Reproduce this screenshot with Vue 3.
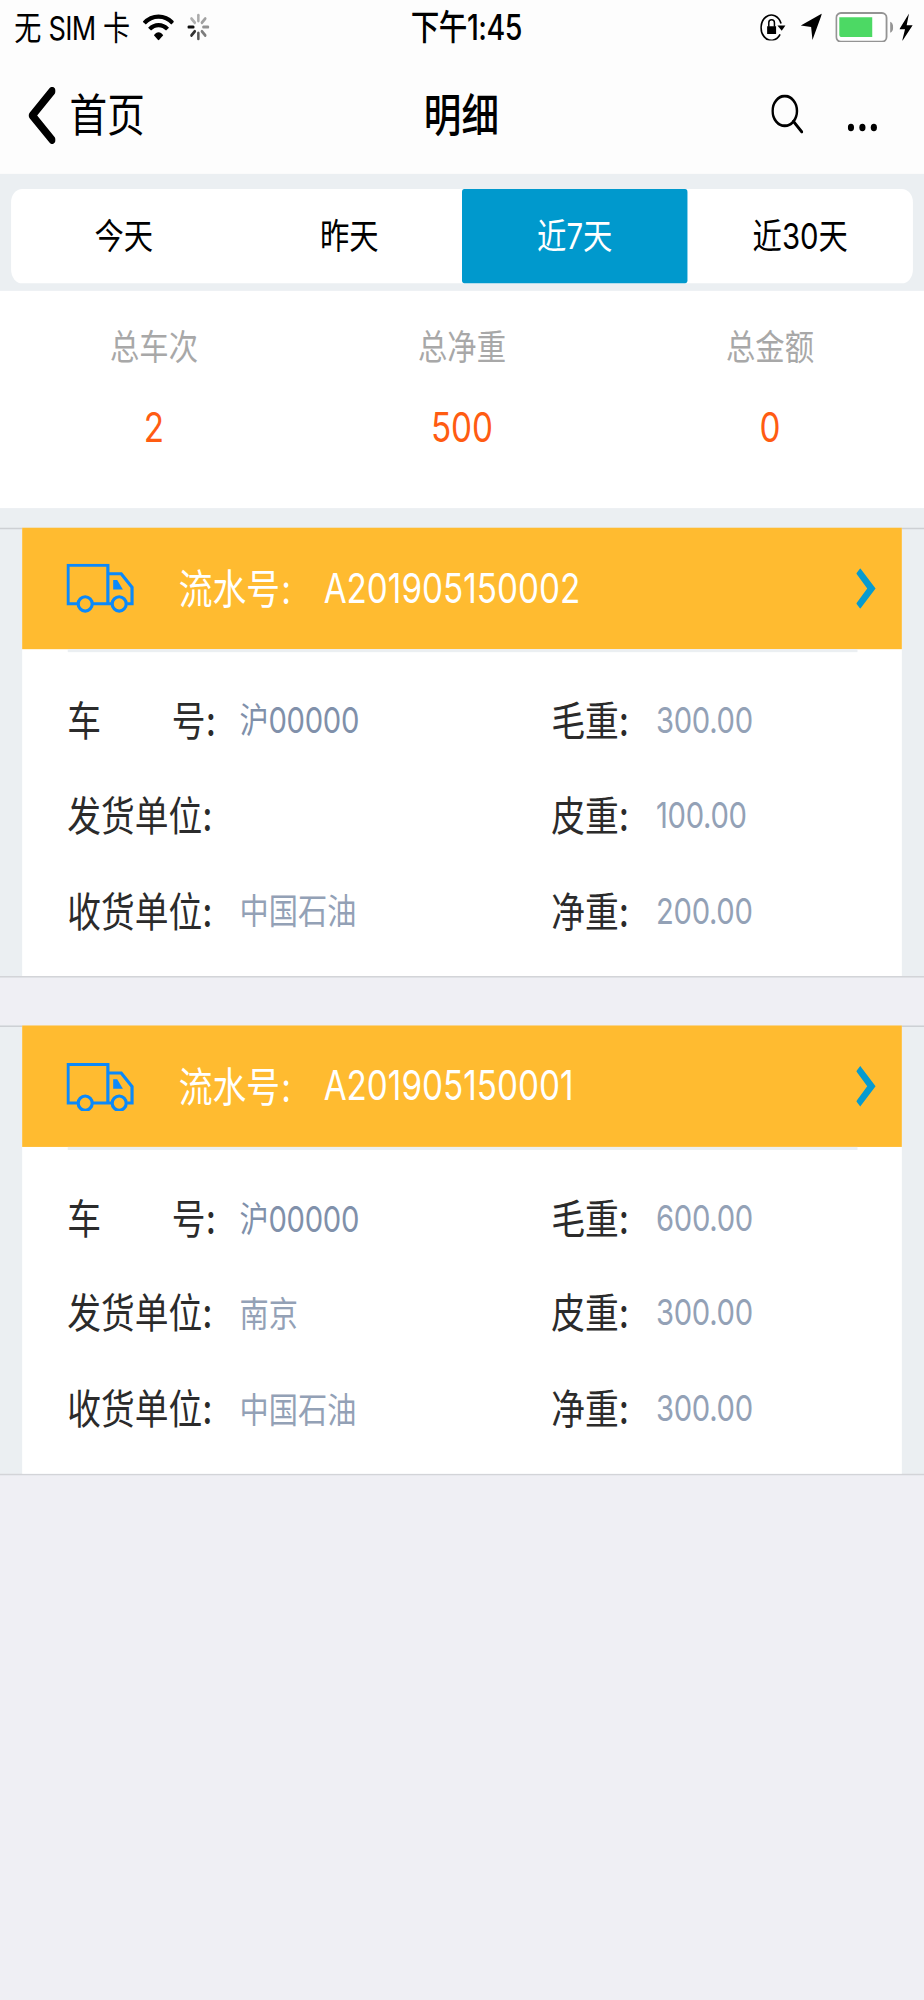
<script setup>
const tabs = ['今天', '昨天', '近7天', '近30天']
const activeTab = '近7天'
const stats = [
  { label: '总车次', value: '2' },
  { label: '总净重', value: '500' },
  { label: '总金额', value: '0' },
]
const records = [
  { no: 'A201905150002', plate: '沪00000', sender: '', receiver: '中国石油', gross: '300.00', tare: '100.00', net: '200.00' },
  { no: 'A201905150001', plate: '沪00000', sender: '南京', receiver: '中国石油', gross: '600.00', tare: '300.00', net: '300.00' },
]
const spokes = [
  [270, 0.95], [225, 0.8], [180, 0.65], [135, 0.5],
  [90, 0.42], [45, 0.36], [0, 0.32], [315, 0.3],
]
</script>

<template>
  <div class="viewport">
    <div class="screen">
      <div class="status">
        <div class="left">
          <span class="carrier">无 <i>SIM</i> 卡</span>
          <svg class="wifi" viewBox="0 0 94 81" preserveAspectRatio="none">
            <path d="M4 29C28 3 66 3 90 29" fill="none" stroke="#000" stroke-width="13" />
            <path d="M20 47C36 31 58 31 74 47" fill="none" stroke="#000" stroke-width="12.5" />
            <path d="M33 65C41 53 53 53 61 65L47 81Z" />
          </svg>
          <svg class="spinner" viewBox="-33 -33 66 66">
            <line v-for="s in spokes" :key="s[0]" x1="0" y1="-15" x2="0" y2="-29" stroke="#000" stroke-width="7.5" stroke-linecap="round" :opacity="s[1]" :transform="`rotate(${s[0]})`" />
          </svg>
        </div>
        <div class="time">下午<i>1:45</i></div>
        <div class="right">
          <svg class="lock" viewBox="0 0 76 82" preserveAspectRatio="none">
            <path d="M63 30A31 38 0 1 0 60 63" fill="none" stroke="#000" stroke-width="5" />
            <path d="M52 36H76L65 52Z" />
            <path d="M21 38H48V62H21Z" />
            <path d="M26 40V28C26 16 43 16 43 28V40" fill="none" stroke="#000" stroke-width="4.5" />
          </svg>
          <svg class="locate" viewBox="0 0 64 80" preserveAspectRatio="none"><path d="M64 0L35 80L31 41L0 36Z" /></svg>
          <svg class="battery" viewBox="0 0 174 92" preserveAspectRatio="none">
            <rect x="3" y="3" width="151" height="86" rx="14" fill="#fff" stroke="#949494" stroke-width="5.5" />
            <path d="M12 16H111V75H20Q12 75 12 67Z" fill="#4cd964" />
            <path d="M165 29Q174 33 174 46Q174 59 165 62Z" fill="#949494" />
          </svg>
          <svg class="bolt" viewBox="0 0 40 84" preserveAspectRatio="none"><path d="M29 0L0 47H17L8 84L40 35H22Z" /></svg>
        </div>
      </div>

      <div class="nav">
        <div class="back">
          <svg viewBox="0 0 22 38"><path d="M19.3 2.7L3.2 19L19.3 35.3" fill="none" stroke="#000" stroke-width="5.6" stroke-linecap="round" stroke-linejoin="round" /></svg>
          <span>首页</span>
        </div>
        <div class="title">明细</div>
        <div class="actions">
          <svg class="search" viewBox="0 0 26 26"><circle cx="11" cy="11" r="9.900" fill="none" stroke="#000" stroke-width="2" /><path d="M18 18L24.8 25" fill="none" stroke="#000" stroke-width="2.2" stroke-linecap="round" /></svg>
          <svg class="dots" viewBox="0 0 24 6"><circle cx="2.7" cy="3" r="2.5" /><circle cx="12" cy="3" r="2.5" /><circle cx="21.3" cy="3" r="2.5" /></svg>
        </div>
      </div>

      <div class="tabs">
        <div class="tab-group">
          <div v-for="t in tabs" :key="t" class="tab" :class="{ active: t === activeTab }"><span>{{ t }}</span></div>
        </div>
      </div>

      <div class="stats">
        <div v-for="s in stats" :key="s.label" class="stat">
          <div class="stat-label">{{ s.label }}</div>
          <div class="stat-value">{{ s.value }}</div>
        </div>
      </div>

      <div class="list">
        <div v-for="r in records" :key="r.no" class="row">
          <div class="card">
            <div class="head">
              <svg class="truck" viewBox="0 0 201 147" preserveAspectRatio="none">
                <g fill="none" stroke="#0a89fb" stroke-width="9.5">
                  <path d="M33 120H4.5V4.5H124V120M78 120H137M124 30H164L196.500 71V120H182" />
                  <ellipse cx="56" cy="120.500" rx="21" ry="21.500" />
                  <ellipse cx="158" cy="120.500" rx="21" ry="21.500" />
                </g>
                <path d="M140 49H152L169 77H140Z" fill="#0a89fb" />
              </svg>
              <span class="serial">流水号<b>:</b></span>
              <span class="no">{{ r.no }}</span>
              <svg class="arrow" viewBox="0 0 58 122" preserveAspectRatio="none"><path d="M12 0L58 61L12 122L0 106L33 61L0 16Z" fill="#069bd0" /></svg>
            </div>
            <div class="divider"></div>
            <div class="fields">
              <div class="label"><span class="wide">车</span>号<b>:</b></div><div class="val plate">{{ r.plate }}</div>
              <div class="label">毛重<b>:</b></div><div class="val num">{{ r.gross }}</div>
              <div class="label">发货单位<b>:</b></div><div class="val">{{ r.sender }}</div>
              <div class="label">皮重<b>:</b></div><div class="val num">{{ r.tare }}</div>
              <div class="label">收货单位<b>:</b></div><div class="val">{{ r.receiver }}</div>
              <div class="label">净重<b>:</b></div><div class="val num">{{ r.net }}</div>
            </div>
          </div>
        </div>
      </div>
    </div>
  </div>
</template>

<style>
html, body { margin: 0; background: #efeff4; }
</style>

<style scoped>
.viewport { width: 924px; height: 2000px; overflow: hidden; }
/* 750 x 1334 layout filling the taller window */
.screen {
  width: 750px; height: 1334px; box-sizing: border-box;
  transform: scale(1.232, 1.49925); transform-origin: 0 0;
  background: #efeff4; color: #000;
  font-family: Inter, "Noto Sans CJK SC", sans-serif; font-weight: 400;
  white-space: nowrap;
}
svg { display: block; flex: none; }
i { font-style: normal; }
b { font-weight: 500; }

.status { display: grid; grid-template-columns: 1fr auto 1fr; height: 38px; background: #fdfdfd; align-items: center; }
.left { display: flex; align-items: center; padding-left: 11.500px; }
.carrier { width: 104.500px; font-size: 22px; line-height: 38px; letter-spacing: -0.150px; margin-top: -1px; }
.carrier i { letter-spacing: -0.6px; }
.wifi { width: 25.4px; height: 18px; margin-top: -3px; }
.spinner { width: 18px; height: 18px; margin: -3px 0 0 11px; }
.time { font-size: 23.200px; line-height: 38px; font-weight: 500; letter-spacing: -0.4px; padding-left: 7px; }
.right { display: flex; align-items: center; justify-content: flex-end; padding-right: 9px; margin-top: -2px; }
.lock { width: 20.5px; height: 18.2px; }
.locate { width: 17.3px; height: 17.7px; margin-left: 12px; }
.battery { width: 47px; height: 20.5px; margin-left: 11px; }
.bolt { width: 10.8px; height: 18.7px; margin-left: 5px; }

.nav { display: grid; grid-template-columns: 1fr auto 1fr; height: 78px; align-items: center; background: #fdfdfd; }
.back { display: flex; align-items: center; padding-left: 23px; font-size: 30.500px; }
.back svg { width: 22px; height: 38px; margin-right: 11.500px; }
.back span { margin-top: -4px; }
.title { font-size: 30.500px; font-weight: 500; margin: -4px 1px 0 0; }
.actions { display: flex; justify-content: flex-end; align-items: center; padding-right: 38.500px; }
.search { width: 26px; height: 26px; margin-top: -3px; }
.dots { width: 24px; height: 6px; margin: 15.500px 0 0 36px; }

.tabs { height: 78px; box-sizing: border-box; padding: 9.600px 9px 5px; background: #ebeff2; }
.tab-group { display: grid; grid-template-columns: repeat(4, 1fr); height: 63.400px; background: #fff; border-radius: 9px; }
.tab { display: flex; align-items: center; justify-content: center; font-size: 23.800px; }
.tab span { margin-top: -4px; }
.tab.active { background: #0099cd; color: #fff; border-radius: 2px; }

.stats { display: grid; grid-template-columns: repeat(3, 1fr); height: 145px; background: #fff; text-align: center; }
.stat-label { margin-top: 22.500px; line-height: 30px; font-size: 23.800px; color: #a8a8a8; }
.stat-value { margin-top: 23.500px; line-height: 32px; font-size: 27px; color: #ff5c12; }

.list { display: flex; flex-direction: column; gap: 31.800px; padding-top: 12.700px; background: linear-gradient(#ebeff2 13px, transparent 13px); }
.row { height: 300.400px; box-sizing: border-box; padding: 0 18px; background: #ebeff2; border-top: 1px solid #cdd0d4; border-bottom: 1px solid #d3d4d8; }
.card { height: 298.400px; background: #fff; }
.head { display: flex; align-items: center; height: 81px; box-sizing: border-box; margin-top: -0.400px; padding: 0 21.500px 0 36.300px; background: #ffbb30; color: #fff; font-size: 27.400px; }
.truck { width: 54.400px; height: 32.700px; }
.serial { width: 117.500px; margin: -3.500px 0 0 36.500px; }
.serial b { font-weight: 400; margin-left: 1px; }
.no { font-size: 27px; }
.arrow { width: 15.700px; height: 27.100px; margin-left: auto; }
.divider { height: 2px; margin: 0 36.500px; background: #ebeff2; }
.fields { display: grid; grid-template-columns: 140px 253px 85px 1fr; grid-auto-rows: 63.500px; align-items: center; padding: 12.300px 0 0 36.500px; }
.label { font-size: 27.400px; color: #2b2b2b; margin-top: -1.500px; }
.wide { display: inline-block; width: 85px; }
.val { font-size: 23.700px; color: #93a1b6; }
.num { padding-top: 1.400px; letter-spacing: -0.250px; }
.plate { color: #8090aa; letter-spacing: -0.250px; }
</style>
